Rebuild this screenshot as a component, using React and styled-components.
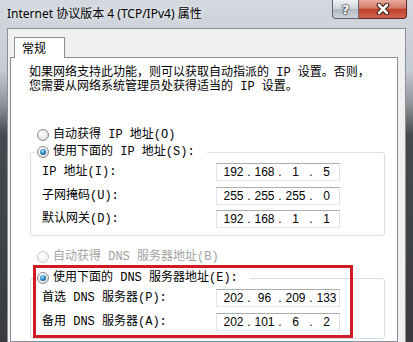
import styled, { createGlobalStyle } from 'styled-components'

const GlobalStyle = createGlobalStyle`
  html, body {
    margin: 0;
    padding: 0;
    background: #3b3d41;
  }
  * {
    box-sizing: border-box;
  }
`;

const bodyFont = `"Liberation Mono", "Noto Sans CJK SC", monospace`;

const Window = styled.div`
  position: relative;
  width: 413px;
  height: 342px;
  overflow: hidden;
  display: flex;
  flex-direction: column;
  padding: 0 7px 0 7px;
  background: linear-gradient(to bottom, #d3d9df 0, #c5cbd2 70px, #8e9297 105px, #46494d 135px, #393b3f 100%);
`;

const TitleBar = styled.div`
  height: 28px;
  display: flex;
  align-items: flex-start;
  flex: none;
`;

const Title = styled.div`
  padding-top: 6px;
  font: 12px/16px "Noto Sans", "Noto Sans CJK SC", sans-serif;
  color: #000;
  text-shadow: 0 0 6px rgba(255, 255, 255, 0.9);
  white-space: nowrap;
`;

const CaptionButtons = styled.div`
  margin-left: auto;
  margin-right: -1px;
  display: flex;
  height: 19px;
`;

const HelpButton = styled.div`
  width: 27px;
  height: 19px;
  border: 1px solid #60656c;
  border-top: none;
  border-radius: 0 0 0 4px;
  background: linear-gradient(to bottom, #eef1f4 0, #d0d5dc 48%, #b3bac3 52%, #cdd3da 100%);
  display: flex;
  align-items: center;
  justify-content: center;
  font: bold 13px/1 "DejaVu Sans", sans-serif;
  color: #fff;
  text-shadow: 0 0 1px #333, 0 0 2px #333, 0 0 2px #333;
`;

const CloseButton = styled.div`
  width: 48px;
  height: 19px;
  border: 1px solid #5b2a22;
  border-top: none;
  border-left: none;
  border-radius: 0 0 4px 0;
  background: linear-gradient(to bottom, #e8ab9e 0, #d47a69 45%, #c2402b 52%, #d06650 100%);
  display: flex;
  align-items: center;
  justify-content: center;
`;

const Client = styled.div`
  flex: 1;
  display: flex;
  flex-direction: column;
  background: #f0f0f0;
  border: 1px solid #8a8f96;
  border-bottom: none;
  padding-top: 8px;
`;

const Tab = styled.div`
  position: relative;
  z-index: 1;
  width: 51px;
  height: 21px;
  margin: 0 0 -1px 6px;
  padding-left: 7px;
  border: 1px solid #898c95;
  border-bottom: none;
  background: #fff;
  font: 12px/19px "Noto Sans CJK SC", sans-serif;
  color: #000;
`;

const Panel = styled.div`
  flex: 1;
  margin: 0 7px 0 2px;
  border: 1px solid #898c95;
  background: #fff;
  padding: 8px 0 0 18px;
  font: 12px/14px ${bodyFont};
  color: #000;
`;

const Intro = styled.div`
  white-space: nowrap;
`;

const RadioRow = styled.div`
  display: flex;
  align-items: center;
  gap: 4px;
  height: 16px;
  line-height: 16px;
  white-space: nowrap;
  margin-left: ${(p) => (p.$inLegend ? '0' : '8px')};
  margin-top: ${(p) => p.$top || '0'};
  color: ${(p) => (p.$disabled ? '#a3a3a3' : '#000')};
`;

const Radio = styled.span`
  flex: none;
  width: 12px;
  height: 12px;
  border-radius: 50%;
  border: 1px solid ${(p) => (p.$disabled ? '#c9c9c9' : '#8a8c8e')};
  background: ${(p) =>
    p.$disabled
      ? 'radial-gradient(circle at 40% 35%, #fff 0, #f6f6f6 50%, #e6e6e6 100%)'
      : 'radial-gradient(circle at 40% 35%, #fff 0, #eeeeee 45%, #cfd1d3 100%)'};
  display: flex;
  align-items: center;
  justify-content: center;

  &::after {
    content: '';
    display: ${(p) => (p.$checked ? 'block' : 'none')};
    width: 6px;
    height: 6px;
    border-radius: 50%;
    background: radial-gradient(circle at 40% 35%, #a8e4ff 0, #2f8bc6 45%, #0c3450 100%);
  }
`;

const Group = styled.fieldset`
  margin: ${(p) => p.$top} 12px 0 1px;
  padding: 3px 0 7px 4px;
  border: 1px solid #d5dfe5;
  border-radius: 3px;
  min-width: 0;
`;

const Legend = styled.legend`
  padding: 0 12px 0 2px;
  height: 16px;
`;

const Rows = styled.div`
  display: flex;
  flex-direction: column;
  gap: 5.5px;
  margin-left: 7px;
`;

const Row = styled.div`
  display: flex;
  align-items: center;
  height: 18px;
`;

const Label = styled.div`
  width: 174px;
  white-space: nowrap;
`;

const IpBox = styled.div`
  width: 124px;
  height: 18px;
  display: flex;
  align-items: center;
  padding-left: 4px;
  border: 1px solid;
  border-color: #abadb3 #dbdfe6 #e3e9ef #e2e3ea;
  background: #fff;
  font: 12px/16px "Liberation Sans", sans-serif;
  color: #000;
`;

const Octet = styled.span`
  width: 25px;
  text-align: center;
`;

const Dot = styled.span`
  width: 6px;
  text-align: center;
`;

const Highlight = styled.div`
  position: absolute;
  left: 33px;
  top: 265px;
  width: 320px;
  height: 73px;
  border: 3px solid #cf1c24;
  pointer-events: none;
`;

const IpField = ({ value }) => {
  const parts = value.split('.');
  return (
    <IpBox>
      {parts.map((p, i) => (
        <span key={i} style={{ display: 'contents' }}>
          {i > 0 && <Dot>.</Dot>}
          <Octet>{p}</Octet>
        </span>
      ))}
    </IpBox>
  );
};

const CloseGlyph = () => (
  <svg width="14" height="12" viewBox="0 0 14 12">
    <path d="M3 2 L11 10 M11 2 L3 10" stroke="#3b1710" strokeWidth="4.6" strokeLinecap="round" fill="none" />
    <path d="M3 2 L11 10 M11 2 L3 10" stroke="#fff" strokeWidth="2.6" strokeLinecap="round" fill="none" />
  </svg>
);

const ipRows = [
  { label: 'IP 地址(I):', value: '192.168.1.5' },
  { label: '子网掩码(U):', value: '255.255.255.0' },
  { label: '默认网关(D):', value: '192.168.1.1' },
];

const dnsRows = [
  { label: '首选 DNS 服务器(P):', value: '202.96.209.133' },
  { label: '备用 DNS 服务器(A):', value: '202.101.6.2' },
];

const App = () => {
  return (
    <>
      <GlobalStyle />
      <Window>
        <TitleBar>
          <Title>Internet 协议版本 4 (TCP/IPv4) 属性</Title>
          <CaptionButtons>
            <HelpButton>?</HelpButton>
            <CloseButton>
              <CloseGlyph />
            </CloseButton>
          </CaptionButtons>
        </TitleBar>
        <Client>
          <Tab>常规</Tab>
          <Panel>
            <Intro>
              如果网络支持此功能，则可以获取自动指派的 IP 设置。否则，
              <br />
              您需要从网络系统管理员处获得适当的 IP 设置。
            </Intro>

            <RadioRow $top="33px">
              <Radio />
              自动获得 IP 地址(O)
            </RadioRow>
            <Group $top="1px">
              <Legend>
                <RadioRow $inLegend>
                  <Radio $checked />
                  使用下面的 IP 地址(S):
                </RadioRow>
              </Legend>
              <Rows>
                {ipRows.map((r) => (
                  <Row key={r.label}>
                    <Label>{r.label}</Label>
                    <IpField value={r.value} />
                  </Row>
                ))}
              </Rows>
            </Group>

            <RadioRow $top="13px" $disabled>
              <Radio $disabled />
              自动获得 DNS 服务器地址(B)
            </RadioRow>
            <Group $top="5px">
              <Legend>
                <RadioRow $inLegend>
                  <Radio $checked />
                  使用下面的 DNS 服务器地址(E):
                </RadioRow>
              </Legend>
              <Rows>
                {dnsRows.map((r) => (
                  <Row key={r.label}>
                    <Label>{r.label}</Label>
                    <IpField value={r.value} />
                  </Row>
                ))}
              </Rows>
            </Group>
          </Panel>
        </Client>
        <Highlight />
      </Window>
    </>
  );
};

export default App
